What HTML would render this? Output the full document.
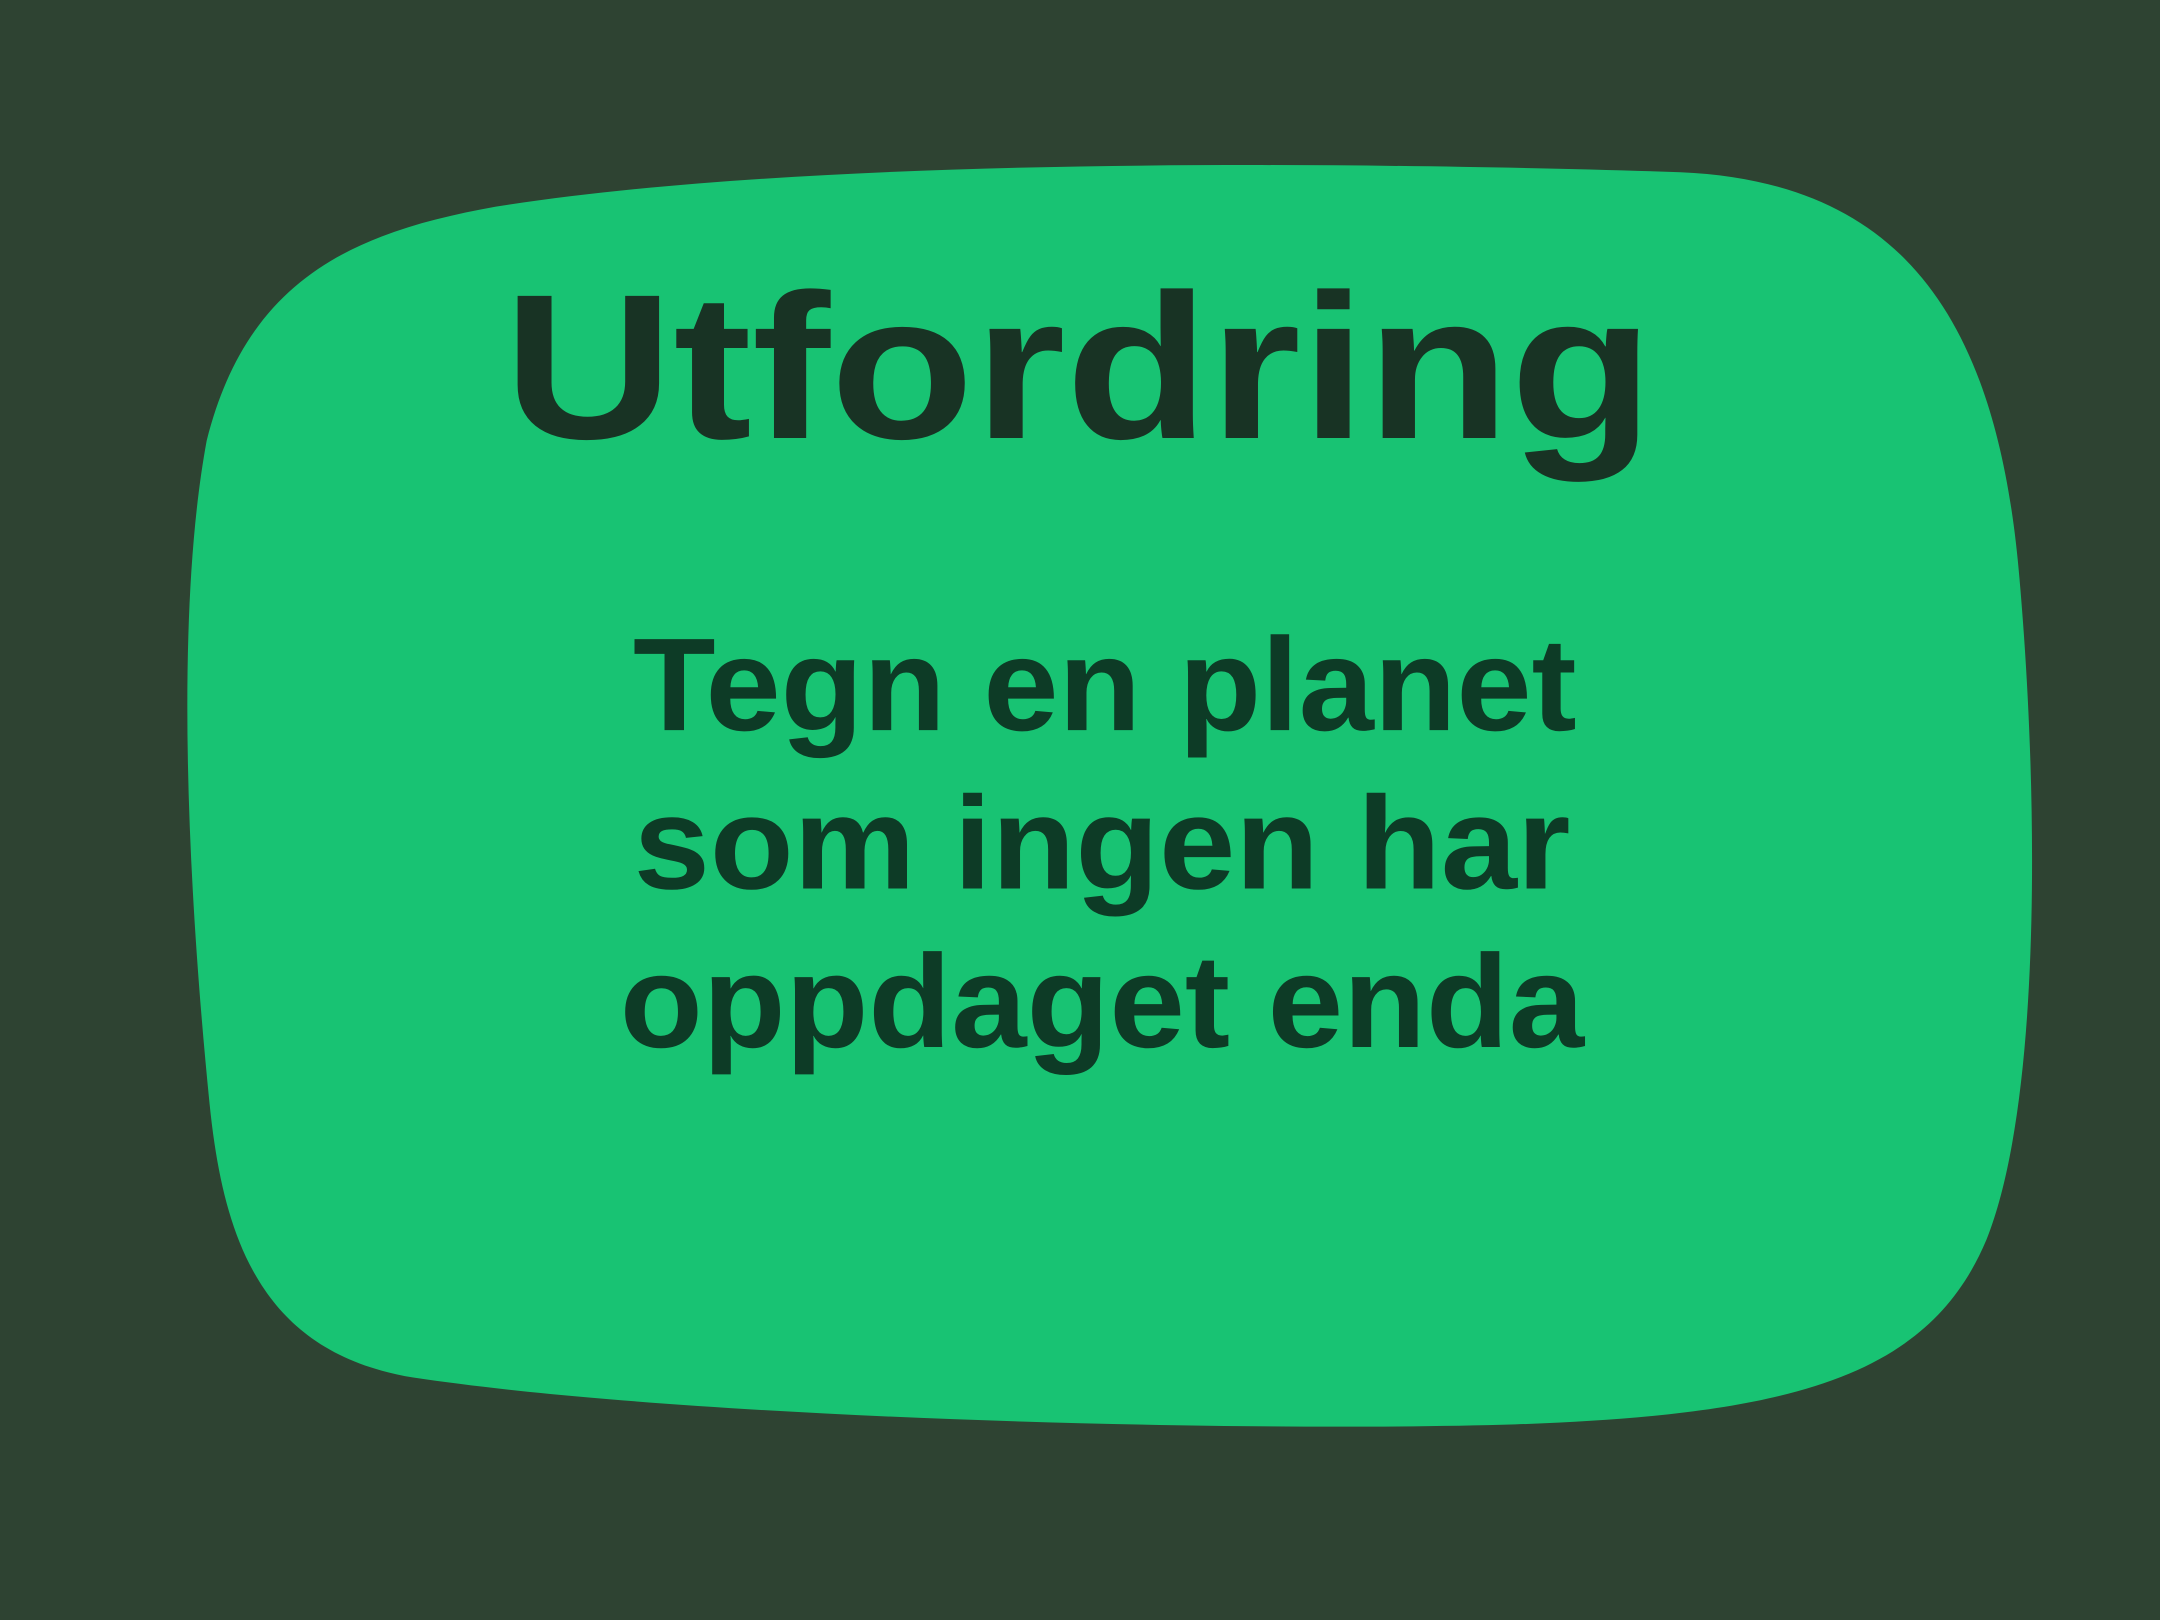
<!DOCTYPE html>
<html><head><meta charset="utf-8"><style>
html,body{margin:0;padding:0;background:#2f4232;}
svg{display:block}
</style></head><body>
<svg width="2160" height="1620" viewBox="0 0 1568 1176" xmlns="http://www.w3.org/2000/svg">
<rect width="1568" height="1176" fill="#2e4332"/>
<path d="M 360,150 C 600,112 1000,118 1220,125 C 1380,132 1450,230 1466,420 C 1480,580 1482,800 1442,900 C 1400,1000 1300,1027 1100,1034 C 900,1040 500,1030 300,1000 C 190,982 162,900 152,800 C 137,650 126,450 150,320 C 180,200 260,168 360,150 Z" fill="#18c373"/>
<g font-family="'Liberation Sans', sans-serif" font-weight="bold" text-anchor="middle">
<text x="783" y="318" font-size="150" fill="#183324" textLength="835" lengthAdjust="spacingAndGlyphs">Utfordring</text>
<text x="802" y="530" font-size="96" fill="#0d3b26" textLength="685" lengthAdjust="spacingAndGlyphs">Tegn en planet</text>
<text x="800" y="645" font-size="96" fill="#0d3b26" textLength="680" lengthAdjust="spacingAndGlyphs">som ingen har</text>
<text x="800" y="760" font-size="96" fill="#0d3b26" textLength="700" lengthAdjust="spacingAndGlyphs">oppdaget enda</text>
</g>
</svg>
</body></html>
